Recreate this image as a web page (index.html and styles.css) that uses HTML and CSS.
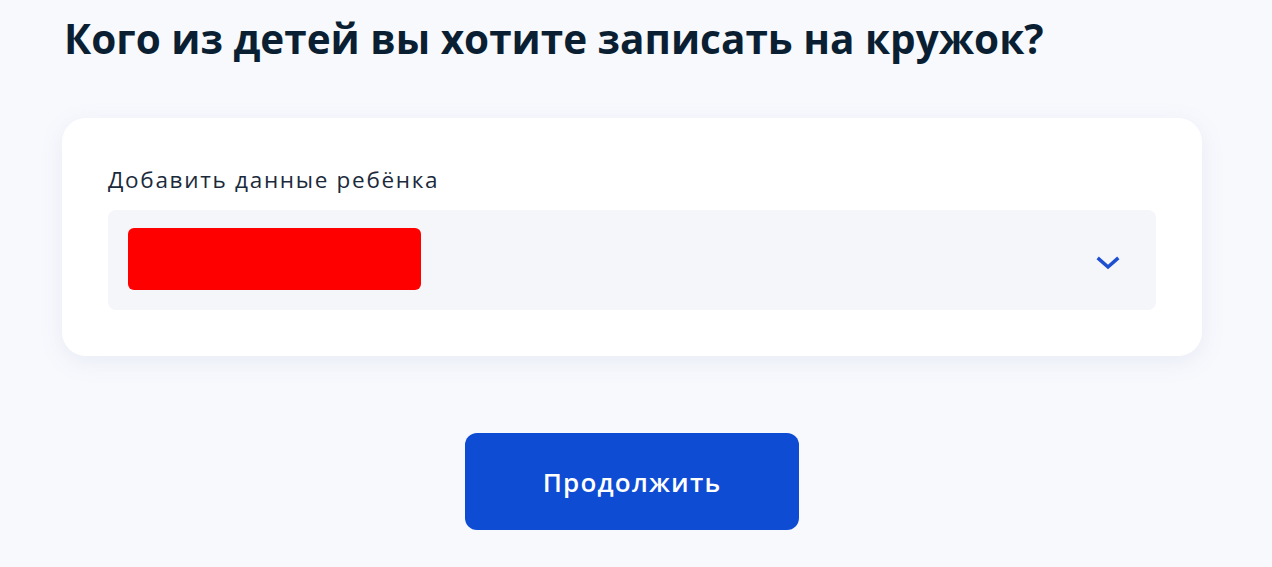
FILE: index.html
```html
<!DOCTYPE html>
<html lang="ru">
<head>
<meta charset="utf-8">
<link rel="stylesheet" href="styles.css">
</head>
<body>
<main class="page">
  <h1 class="title">Кого из детей вы хотите записать на кружок?</h1>
  <section class="card">
    <div class="label">Добавить данные ребёнка</div>
    <div class="select">
      <div class="redacted"></div>
      <svg class="chevron" width="24" height="16" viewBox="0 0 24 16" aria-hidden="true">
        <path d="M3 3 L12 11 L21 3" fill="none" stroke="#1f4fd1" stroke-width="3.5" stroke-linecap="square" stroke-linejoin="miter"/>
      </svg>
    </div>
  </section>
  <div class="actions">
    <button class="btn">Продолжить</button>
  </div>
</main>
</body>
</html>
```
FILE: styles.css
```css
html, body {
  margin: 0;
  padding: 0;
  background: #f8f9fd;
  font-family: "Open Sans", "Noto Sans", sans-serif;
  color: #0b1f33;
}
.page {
  width: 1272px;
  height: 567px;
  box-sizing: border-box;
  padding: 10px 70px 0 62px;
}
.title {
  margin: 0 0 0 2px;
  font-size: 40.5px;
  line-height: 58px;
  font-weight: 700;
  white-space: nowrap;
}
.card {
  margin-top: 50px;
  background: #fff;
  border-radius: 24px;
  box-shadow: 0 6px 24px rgba(100, 120, 180, 0.10);
  padding: 47px 46px 46px 46px;
  height: 238px;
  box-sizing: border-box;
}
.label {
  font-size: 22.5px;
  line-height: 30px;
  letter-spacing: 1.7px;
  color: #1b2a3b;
  margin-bottom: 15px;
}
.select {
  height: 100px;
  background: #f4f6fa;
  border-radius: 8px;
  display: flex;
  align-items: center;
  padding: 0 36px 0 20px;
}
.redacted {
  width: 293px;
  height: 62px;
  background: #ff0000;
  border-radius: 6px;
  margin-top: -2px;
}
.chevron {
  margin-left: auto;
  margin-top: 8px;
}
.actions {
  display: flex;
  justify-content: center;
  margin-top: 77px;
}
.btn {
  width: 334px;
  height: 97px;
  border: none;
  border-radius: 12px;
  background: #0d4cd3;
  color: #fff;
  font-family: "Open Sans", "Noto Sans", sans-serif;
  font-size: 26px;
  font-weight: 600;
  letter-spacing: 1.2px;
  padding: 0;
}
```
